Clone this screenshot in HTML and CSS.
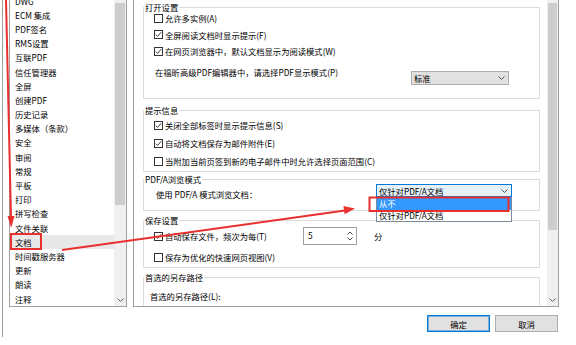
FILE: index.html
```html
<!DOCTYPE html>
<html lang="zh-CN">
<head>
    <meta charset="UTF-8">
    <title>首选项 - 文档</title>
    <link rel="stylesheet" href="styles.css">
</head>
<body>
    <div class="window">
        <div class="panes">
            <div class="nav">
                <ul class="nav-list">
                    <li class="nav-item">DWG</li>
                    <li class="nav-item">ECM 集成</li>
                    <li class="nav-item">PDF签名</li>
                    <li class="nav-item">RMS设置</li>
                    <li class="nav-item">互联PDF</li>
                    <li class="nav-item">信任管理器</li>
                    <li class="nav-item">全屏</li>
                    <li class="nav-item">创建PDF</li>
                    <li class="nav-item">历史记录</li>
                    <li class="nav-item">多媒体（条款）</li>
                    <li class="nav-item">安全</li>
                    <li class="nav-item">审阅</li>
                    <li class="nav-item">常规</li>
                    <li class="nav-item">平板</li>
                    <li class="nav-item">打印</li>
                    <li class="nav-item">拼写检查</li>
                    <li class="nav-item">文件关联</li>
                    <li class="nav-item selected">文档</li>
                    <li class="nav-item">时间戳服务器</li>
                    <li class="nav-item">更新</li>
                    <li class="nav-item">朗读</li>
                    <li class="nav-item">注释</li>
                </ul>
                <div class="scrollbar nav-scrollbar">
                    <div class="thumb"></div>
                    <div class="scroll-down">
                        <svg width="7" height="4" viewBox="0 0 7 4"><path d="M0.5 0.5 L3.5 3.5 L6.5 0.5" fill="none" stroke="#606060"/></svg>
                    </div>
                </div>
            </div>

            <div class="settings">
                <div class="settings-body">
                    <fieldset class="group group-open">
                        <legend>打开设置</legend>
                        <div class="group-body">
                            <div class="check-row"><span class="checkbox"></span><span>允许多实例(A)</span></div>
                            <div class="check-row"><span class="checkbox checked"><svg width="7" height="7" viewBox="0 0 7 7"><path d="M0.8 3.6 L2.6 5.4 L6.2 1.2" fill="none" stroke="#222" stroke-width="0.9"/></svg></span><span>全屏阅读文档时显示提示(F)</span></div>
                            <div class="check-row"><span class="checkbox checked"><svg width="7" height="7" viewBox="0 0 7 7"><path d="M0.8 3.6 L2.6 5.4 L6.2 1.2" fill="none" stroke="#222" stroke-width="0.9"/></svg></span><span>在网页浏览器中，默认文档显示为阅读模式(W)</span></div>
                            <div class="select-row display-mode">
                                <span class="label">在福昕高级PDF编辑器中，请选择PDF显示模式(P)</span>
                                <div class="select">
                                    <span>标准</span>
                                    <svg width="7" height="4" viewBox="0 0 7 4"><path d="M0.5 0.5 L3.5 3.5 L6.5 0.5" fill="none" stroke="#555"/></svg>
                                </div>
                            </div>
                        </div>
                    </fieldset>

                    <fieldset class="group group-tips">
                        <legend>提示信息</legend>
                        <div class="group-body">
                            <div class="check-row"><span class="checkbox checked"><svg width="7" height="7" viewBox="0 0 7 7"><path d="M0.8 3.6 L2.6 5.4 L6.2 1.2" fill="none" stroke="#222" stroke-width="0.9"/></svg></span><span>关闭全部标签时显示提示信息(S)</span></div>
                            <div class="check-row"><span class="checkbox checked"><svg width="7" height="7" viewBox="0 0 7 7"><path d="M0.8 3.6 L2.6 5.4 L6.2 1.2" fill="none" stroke="#222" stroke-width="0.9"/></svg></span><span>自动将文档保存为邮件附件(E)</span></div>
                            <div class="check-row"><span class="checkbox"></span><span>当附加当前页签到新的电子邮件中时允许选择页面范围(C)</span></div>
                        </div>
                    </fieldset>

                    <fieldset class="group group-pdfa">
                        <legend>PDF/A浏览模式</legend>
                        <div class="group-body">
                            <div class="select-row pdfa-mode">
                                <span class="label">使用 PDF/A 模式浏览文档：</span>
                                <div class="select select-open">
                                    <span>仅针对PDF/A文档</span>
                                    <svg width="7" height="4" viewBox="0 0 7 4"><path d="M0.5 0.5 L3.5 3.5 L6.5 0.5" fill="none" stroke="#555"/></svg>
                                    <ul class="dropdown">
                                        <li class="option highlighted">从不</li>
                                        <li class="option">仅针对PDF/A文档</li>
                                    </ul>
                                </div>
                            </div>
                        </div>
                    </fieldset>

                    <fieldset class="group group-save">
                        <legend>保存设置</legend>
                        <div class="group-body">
                            <div class="check-row autosave">
                                <span class="checkbox checked"><svg width="7" height="7" viewBox="0 0 7 7"><path d="M0.8 3.6 L2.6 5.4 L6.2 1.2" fill="none" stroke="#222" stroke-width="0.9"/></svg></span>
                                <span class="autosave-label">自动保存文件，频次为每(T)</span>
                                <div class="spin">
                                    <span class="spin-value">5</span>
                                    <div class="spin-arrows">
                                        <svg width="6" height="4" viewBox="0 0 6 4"><path d="M0.5 3.5 L3 1 L5.5 3.5" fill="none" stroke="#444"/></svg>
                                        <svg width="6" height="4" viewBox="0 0 6 4"><path d="M0.5 0.5 L3 3 L5.5 0.5" fill="none" stroke="#444"/></svg>
                                    </div>
                                </div>
                                <span class="unit">分</span>
                            </div>
                            <div class="check-row"><span class="checkbox"></span><span>保存为优化的快速网页视图(V)</span></div>
                        </div>
                    </fieldset>

                    <fieldset class="group group-path">
                        <legend>首选的另存路径</legend>
                        <div class="group-body">
                            <div class="path-label">首选的另存路径(L):</div>
                        </div>
                    </fieldset>
                </div>
                <div class="scrollbar main-scrollbar">
                    <div class="thumb"></div>
                    <div class="scroll-down">
                        <svg width="7" height="4" viewBox="0 0 7 4"><path d="M0.5 0.5 L3.5 3.5 L6.5 0.5" fill="none" stroke="#606060"/></svg>
                    </div>
                </div>
            </div>
        </div>

        <div class="buttons">
            <button class="btn btn-default">确定</button>
            <button class="btn">取消</button>
        </div>
    </div>

    <!-- red markup drawn on the screenshot -->
    <svg class="markup" width="576" height="345" viewBox="0 0 576 345">
        <g fill="none" stroke="#e8312f" stroke-width="2">
            <line x1="6" y1="0" x2="11" y2="218"/>
            <rect x="11" y="234" width="30" height="15"/>
            <line x1="62" y1="250" x2="345" y2="210.5"/>
            <rect x="369.5" y="197.5" width="139" height="13.5"/>
        </g>
        <g fill="#e8312f">
            <polygon points="7.5,216 14.5,216 11.2,228"/>
            <polygon points="355,208.5 344.7,214.2 343.4,205.9"/>
        </g>
    </svg>
</body>
</html>
```

FILE: styles.css
```css
* {
    box-sizing: border-box;
}

body {
    position: relative;
    margin: 0;
    width: 576px;
    height: 345px;
    overflow: hidden;
    background-color: #fff;
    color: #000;
    font-family: "Noto Sans CJK SC", "Liberation Sans", sans-serif;
    font-size: 8.3px;
    line-height: 12px;
}

.window {
    height: 345px;
    margin-left: 2px;
    border-left: 1px solid #a0a0a0;
    padding-left: 6px;
}

.panes {
    display: flex;
    gap: 6px;
    height: 315px;
    margin-top: -8px;
    margin-right: 17px;
}

/* left category list */
.nav {
    display: flex;
    width: 118px;
    border: 1px solid #a0a0a0;
    overflow: hidden;
}

.nav-list {
    flex: 1;
    margin: 0;
    padding: 0.6px 0 0 0;
    list-style: none;
}

.nav-item {
    height: 14.2px;
    line-height: 14.2px;
    padding-left: 5px;
    white-space: nowrap;
}

.nav-item.selected {
    background-color: #e8e8e8;
}

.scrollbar {
    display: flex;
    flex-direction: column;
    background-color: #f0f0f0;
}

.nav-scrollbar {
    width: 12px;
}

.main-scrollbar {
    width: 11px;
}

.thumb {
    margin: 10px 1px 0 1px;
    background-color: #cdcdcd;
}

.nav-scrollbar .thumb {
    height: 202px;
}

.main-scrollbar .thumb {
    height: 227px;
}

.scroll-down {
    margin-top: auto;
    height: 13px;
    display: flex;
    align-items: center;
    justify-content: center;
}

.scroll-down svg {
    display: block;
}

/* right settings pane */
.settings {
    display: flex;
    width: 426px;
    border: 1px solid #a0a0a0;
    overflow: hidden;
}

.settings-body {
    flex: 1;
    padding: 0 7px 0 9px;
    overflow: hidden;
}

.group {
    margin: 0;
    padding: 0;
    border: 1px solid #dcdcdc;
    min-width: 0;
}

.group legend {
    padding: 0 1px;
    line-height: 10px;
}

.group-body {
    display: flex;
    flex-direction: column;
    padding-left: 10px;
}

.check-row {
    display: flex;
    align-items: center;
    gap: 2px;
    height: 12px;
    white-space: nowrap;
}

.checkbox {
    display: flex;
    align-items: center;
    justify-content: center;
    width: 9px;
    height: 9px;
    border: 1px solid #333;
    background-color: #fff;
    flex: none;
}

.checkbox svg {
    display: block;
}

.select-row {
    display: flex;
    align-items: flex-start;
    white-space: nowrap;
}

.select {
    position: relative;
    display: flex;
    align-items: center;
    justify-content: space-between;
    margin-left: auto;
    padding: 0 3px 0 2px;
    border: 1px solid #adadad;
    background-color: #e1e1e1;
}

.select svg {
    display: block;
}

/* group 1 */
.group-open {
    margin-top: 9px;
}

.group-open .group-body {
    gap: 4.5px;
    padding-bottom: 13px;
}

.display-mode {
    margin-top: 4.5px;
}

.display-mode .label {
    padding-left: 1px;
}

.display-mode .select {
    width: 98px;
    height: 14px;
    margin-top: 5px;
    margin-right: 30px;
}

/* group 2 */
.group-tips {
    margin-top: 6px;
}

.group-tips .group-body {
    gap: 6px;
    padding-top: 4px;
    padding-bottom: 4px;
}

/* group 3 */
.group-pdfa {
    margin-top: 2px;
}

.group-pdfa .group-body {
    padding-bottom: 10px;
}

.pdfa-mode {
    height: 16px;
}

.pdfa-mode .label {
    margin-top: 4px;
    padding-left: 2px;
}

.select-open {
    width: 136px;
    height: 13px;
    margin-right: 27px;
    border-color: #0078d7;
    background-color: #e5f1fb;
}

.dropdown {
    position: absolute;
    top: 12px;
    left: -1px;
    right: -1px;
    margin: 0;
    padding: 0;
    list-style: none;
    border: 1px solid #7a8a9c;
    background-color: #fff;
}

.option {
    height: 11.5px;
    line-height: 11.5px;
    padding-left: 2px;
}

.option.highlighted {
    background-color: #3399ff;
    color: #fff;
}

/* group 4 */
.group-save {
    margin-top: 4px;
}

.group-save .group-body {
    gap: 6px;
    padding-top: 2px;
    padding-bottom: 4px;
}

.autosave {
    height: 18px;
}

.autosave-label {
    width: 136px;
}

.spin {
    display: flex;
    justify-content: space-between;
    width: 54px;
    height: 18px;
    border: 1px solid #a0a0a0;
    background-color: #fff;
}

.spin-value {
    padding: 1px 0 0 4px;
}

.spin-arrows {
    display: flex;
    flex-direction: column;
    justify-content: space-around;
    padding: 2px 3px;
}

.spin-arrows svg {
    display: block;
}

.unit {
    margin-left: 15px;
}

/* group 5 */
.group-path {
    margin-top: 4px;
}

.group-path .group-body {
    padding: 8px 0 20px 6px;
}

/* dialog buttons */
.buttons {
    display: flex;
    justify-content: flex-end;
    gap: 5px;
    margin-top: 8px;
    margin-right: 18px;
}

.btn {
    width: 63px;
    height: 17px;
    padding: 0;
    border: 1px solid #adadad;
    background-color: #e1e1e1;
    color: #000;
    font-family: inherit;
    font-size: 8.3px;
    line-height: 12px;
}

.btn-default {
    border-color: #0078d7;
    box-shadow: inset 0 0 0 1px rgba(0, 120, 215, 0.45);
}

.markup {
    position: absolute;
    top: 0;
    left: 0;
    pointer-events: none;
}
```
